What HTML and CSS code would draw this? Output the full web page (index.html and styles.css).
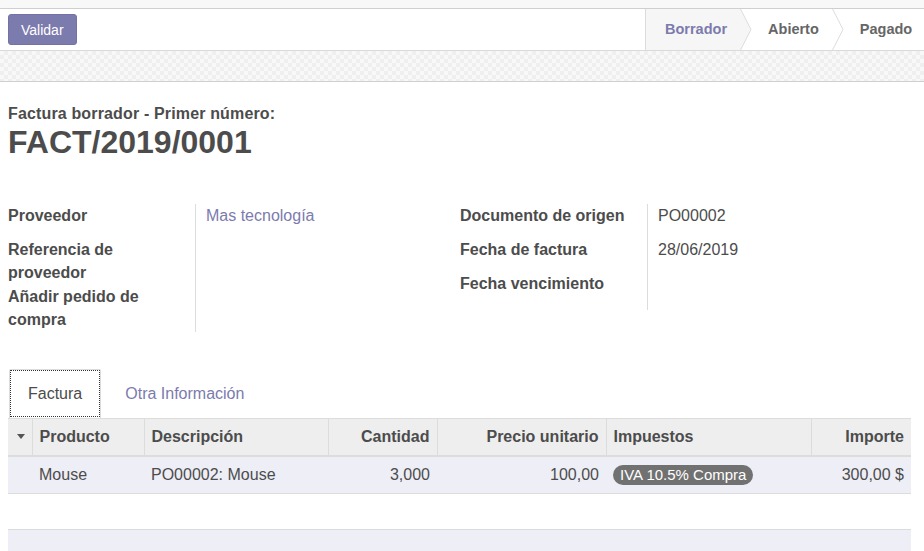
FILE: index.html
```html
<!DOCTYPE html>
<html lang="es">
<head>
<meta charset="utf-8">
<title>FACT/2019/0001</title>
<link rel="stylesheet" href="styles.css">
</head>
<body>
<div class="topstrip"></div>
<div class="statusrow">
  <button class="btn-primary" type="button">Validar</button>
  <div class="statusbar">
    <div class="stage active">Borrador<svg class="chev" viewBox="0 0 12 41" preserveAspectRatio="none"><path d="M0 -1 L11 20.5 L0 42" fill="#f6f6f6" stroke="#dcdcdc" stroke-width="1"/></svg></div>
    <div class="stage">Abierto<svg class="chev" viewBox="0 0 12 41" preserveAspectRatio="none"><path d="M0 -1 L11 20.5 L0 42" fill="#ffffff" stroke="#dcdcdc" stroke-width="1"/></svg></div>
    <div class="stage last">Pagado</div>
  </div>
</div>
<div class="band"></div>
<div class="sheet">
  <div class="subtitle">Factura borrador - Primer número:</div>
  <h1 class="docname">FACT/2019/0001</h1>

  <div class="groups">
    <div class="group">
      <div class="lbl r1">Proveedor</div><div class="val r1 link">Mas tecnología</div>
      <div class="lbl">Referencia de proveedor</div><div class="val"></div>
      <div class="lbl">Añadir pedido de compra</div><div class="val"></div>
    </div>
    <div class="group right">
      <div class="lbl r1">Documento de origen</div><div class="val r1">PO00002</div>
      <div class="lbl r1">Fecha de factura</div><div class="val r1">28/06/2019</div>
      <div class="lbl r1">Fecha vencimiento</div><div class="val r1 lastval"></div>
    </div>
  </div>

  <div class="tabs">
    <div class="tab active">Factura</div>
    <div class="tab link">Otra Información</div>
  </div>

  <table class="lines">
    <colgroup>
      <col class="c-caret"><col class="c-prod"><col class="c-desc"><col class="c-qty"><col class="c-price"><col class="c-tax"><col class="c-amt">
    </colgroup>
    <thead>
      <tr>
        <th class="caretcell"><span class="caret"></span></th>
        <th>Producto</th>
        <th>Descripción</th>
        <th class="num">Cantidad</th>
        <th class="num">Precio unitario</th>
        <th>Impuestos</th>
        <th class="num">Importe</th>
      </tr>
    </thead>
    <tbody>
      <tr class="data">
        <td></td>
        <td>Mouse</td>
        <td>PO00002: Mouse</td>
        <td class="num">3,000</td>
        <td class="num">100,00</td>
        <td><span class="badge">IVA 10.5% Compra</span></td>
        <td class="num">300,00 $</td>
      </tr>
      <tr class="empty"><td colspan="7"></td></tr>
    </tbody>
    <tfoot>
      <tr><td colspan="7"></td></tr>
    </tfoot>
  </table>
</div>
</body>
</html>
```

FILE: styles.css
```css
* { box-sizing: border-box; }
html, body { margin: 0; padding: 0; }
body {
  font-family: "Liberation Sans", Arial, sans-serif;
  color: #4c4c4c;
  background: #fff;
  width: 924px;
  height: 551px;
  overflow: hidden;
}
.topstrip {
  height: 9px;
  background: #f8f8f8;
  border-bottom: 1px solid #cfcfcf;
}
.statusrow {
  display: flex;
  align-items: flex-start;
  justify-content: space-between;
  height: 42px;
  border-bottom: 1px solid #dadada;
}
.btn-primary {
  margin: 5px 0 0 8px;
  height: 31px;
  padding: 0 12px;
  background: #7c7bad;
  border: 1px solid #7372a5;
  border-radius: 3px;
  color: #fff;
  font-family: "Liberation Sans", Arial, sans-serif;
  font-size: 14px;
}
.statusbar {
  display: flex;
  height: 41px;
  border-left: 1px solid #dcdcdc;
  width: 279px;
}
.stage {
  position: relative;
  display: flex;
  align-items: center;
  height: 41px;
  padding: 0 14px 1px 27px;
  font-size: 14.5px;
  font-weight: bold;
  color: #666;
}
.stage.active {
  background: #f6f6f6;
  color: #7c7bad;
  padding-left: 19px;
}
.stage.last { padding-right: 0; }
.chev {
  position: absolute;
  right: -11px;
  top: 0;
  width: 12px;
  height: 41px;
  z-index: 1;
}
.band {
  height: 31px;
  border-bottom: 1px solid #cfcfcf;
  background-color: #f5f5f5;
  background-image: repeating-conic-gradient(#efefef 0 25%, #f8f8f8 0 50%);
  background-size: 8px 8px;
}
.sheet {
  padding: 20px 13px 0 8px;
}
.subtitle {
  font-size: 16px;
  font-weight: bold;
  line-height: 23.5px;
  letter-spacing: 0.15px;
}
.docname {
  margin: -1px 0 0 0;
  font-size: 32px;
  line-height: 35px;
  font-weight: bold;
}
.groups {
  display: grid;
  grid-template-columns: 452px 1fr;
  margin-top: 44px;
}
.group {
  display: grid;
  grid-template-columns: 187px 1fr;
  align-content: start;
  font-size: 16px;
  line-height: 23.5px;
}
.lbl {
  font-weight: bold;
  padding-right: 20px;
}
.val {
  border-left: 1px solid #dcdcdc;
  padding-left: 10px;
}
.r1 { min-height: 34px; }
.lastval { min-height: 38px; }
.link { color: #7c7bad; }
.tabs {
  display: flex;
  margin-top: 37px;
  height: 49px;
  align-items: flex-end;
}
.tab {
  font-size: 16px;
  line-height: 23px;
  padding: 12px 18px 13px 18px;
  margin-right: 5px;
  border: 1px solid transparent;
  border-bottom: 0;
}
.tab.active {
  margin-left: 1px;
  border-color: #dcdcdc;
  border-radius: 2px 2px 0 0;
  outline: 1px dotted #333;
  outline-offset: -2px;
}
.lines {
  width: 903px;
  table-layout: fixed;
  border-collapse: collapse;
  font-size: 16px;
}
.c-caret { width: 24px; }
.c-prod { width: 112px; }
.c-desc { width: 184px; }
.c-qty { width: 109px; }
.c-price { width: 169px; }
.c-tax { width: 205px; }
.c-amt { width: 100px; }
.lines thead tr {
  background: #eeeeee;
  border-top: 1px solid #dcdcdc;
  border-bottom: 2px solid #dcdcdc;
}
.lines th {
  height: 38px;
  padding: 0 7px;
  text-align: left;
  font-weight: bold;
  border-left: 1px solid #dcdcdc;
  white-space: nowrap;
}
.lines th.caretcell {
  border-left: 0;
  padding: 0;
  text-align: center;
}
.caret {
  display: inline-block;
  width: 0;
  height: 0;
  border-left: 4.5px solid transparent;
  border-right: 4.5px solid transparent;
  border-top: 5px solid #555;
  vertical-align: middle;
  position: relative;
  left: 1px;
  top: -1px;
}
.lines .num { text-align: right; }
.lines td {
  padding: 0 7px;
  white-space: nowrap;
}
.lines tr.data {
  background: #eeeef6;
  border-bottom: 1px solid #dcdcdc;
}
.lines tr.data td { height: 37px; }
.lines tr.empty td { height: 36px; }
.lines tfoot tr {
  background: #eeeef6;
  border-top: 1px solid #dcdcdc;
}
.lines tfoot td { height: 40px; }
.badge {
  display: inline-block;
  background: #717171;
  color: #fff;
  border-radius: 10px;
  padding: 0 7px;
  line-height: 20px;
  font-size: 15px;
}
```
